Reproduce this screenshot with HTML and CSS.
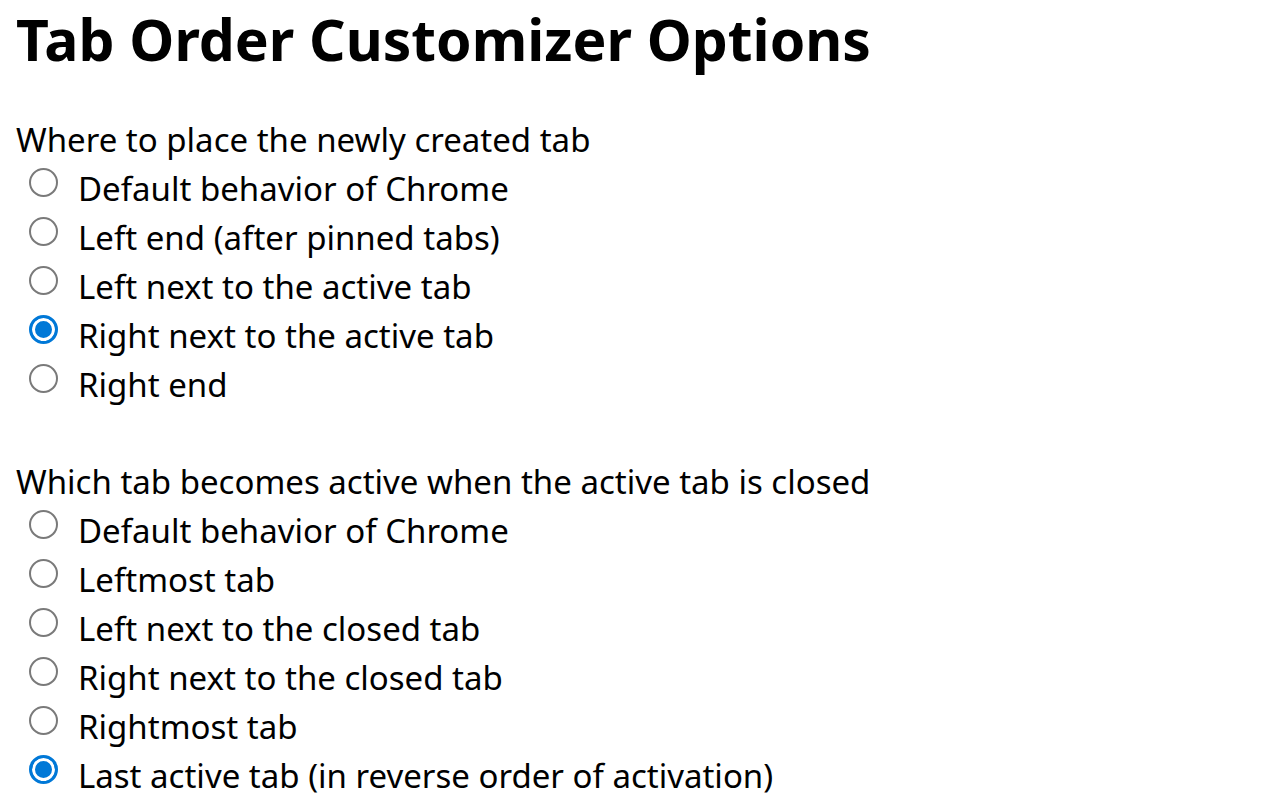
FILE: index.html
```html
<!DOCTYPE html>
<html lang="en">
<head>
<meta charset="utf-8">
<title>Tab Order Customizer Options</title>
<link rel="stylesheet" href="styles.css">
</head>
<body>
<h1 class="title">Tab Order Customizer Options</h1>
<section class="group">
  <div class="group-label">Where to place the newly created tab</div>
  <label class="option"><input type="radio" name="create" class="radio"><span>Default behavior of Chrome</span></label>
  <label class="option"><input type="radio" name="create" class="radio"><span>Left end (after pinned tabs)</span></label>
  <label class="option"><input type="radio" name="create" class="radio"><span>Left next to the active tab</span></label>
  <label class="option"><input type="radio" name="create" class="radio" checked><span>Right next to the active tab</span></label>
  <label class="option"><input type="radio" name="create" class="radio"><span>Right end</span></label>
</section>
<section class="group group-second">
  <div class="group-label">Which tab becomes active when the active tab is closed</div>
  <label class="option"><input type="radio" name="close" class="radio"><span>Default behavior of Chrome</span></label>
  <label class="option"><input type="radio" name="close" class="radio"><span>Leftmost tab</span></label>
  <label class="option"><input type="radio" name="close" class="radio"><span>Left next to the closed tab</span></label>
  <label class="option"><input type="radio" name="close" class="radio"><span>Right next to the closed tab</span></label>
  <label class="option"><input type="radio" name="close" class="radio"><span>Rightmost tab</span></label>
  <label class="option"><input type="radio" name="close" class="radio" checked><span>Last active tab (in reverse order of activation)</span></label>
</section>
</body>
</html>
```

FILE: styles.css
```css
html, body {
  margin: 0;
  padding: 0;
  background: #ffffff;
}
body {
  padding: 0 16px;
  font-family: "Noto Sans", "Open Sans", sans-serif;
  color: #000000;
  overflow: hidden;
}
.title {
  margin: 0 0 37px 0;
  font-size: 57px;
  line-height: 78px;
  font-weight: 700;
}
.group {
  font-size: 33px;
  line-height: 49px;
}
.group-second {
  margin-top: 48px;
}
.group-label {
  height: 49px;
}
.option {
  display: flex;
  align-items: flex-start;
  height: 49px;
}
.radio {
  appearance: none;
  -webkit-appearance: none;
  box-sizing: border-box;
  width: 29px;
  height: 29px;
  margin: 4px 20px 0 13px;
  border: 2px solid #7a7a7a;
  border-radius: 50%;
  background: #ffffff;
  flex: none;
}
.radio:checked {
  border: 3px solid #0078d7;
  background: #0078d7;
  box-shadow: inset 0 0 0 3px #ffffff;
}
```
